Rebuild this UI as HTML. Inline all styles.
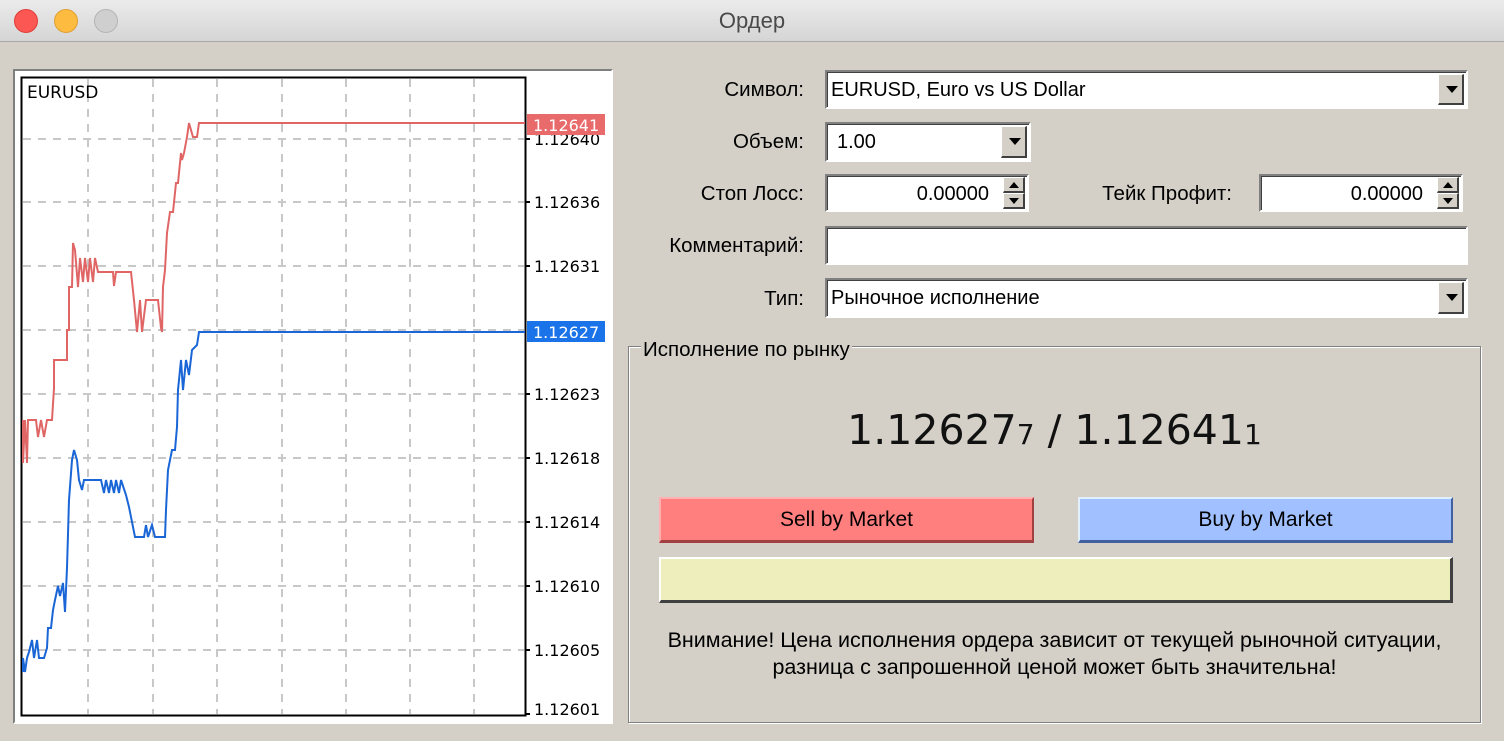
<!DOCTYPE html>
<html><head><meta charset="utf-8"><style>
*{margin:0;padding:0;box-sizing:border-box}
body{width:1504px;height:741px;background:#d4d0c8;position:relative;overflow:hidden;font-family:"Liberation Sans","DejaVu Sans",sans-serif;color:#000}
.a{position:absolute}
.title{left:0;top:0;width:1504px;height:42px;background:linear-gradient(#ebebeb,#d5d5d5);border-bottom:1px solid #a8a8a8;text-align:center;font-size:22px;line-height:42px;color:#4a4a4a}
.dot{top:9px;width:24px;height:24px;border-radius:50%}
.lbl{font-size:20.5px;text-align:right;width:200px}
.inset{background:#fff;border-top:2px solid #808080;border-left:2px solid #808080;border-bottom:2px solid #fff;border-right:2px solid #fff;box-shadow:inset 1px 1px 0 #404040;font-size:20px;padding-left:4px;line-height:36px}
.drop{position:absolute;right:2px;top:2px;width:26px;bottom:2px;background:#d4d0c8;border-top:1px solid #fff;border-left:1px solid #fff;border-right:2px solid #404040;border-bottom:2px solid #404040}
.drop:after{content:"";position:absolute;left:7px;top:11px;border-left:6px solid transparent;border-right:6px solid transparent;border-top:7px solid #000}
.spin{position:absolute;right:2px;top:1px;width:22px;bottom:1px}
.spin div{height:50%;background:#d4d0c8;border-top:1px solid #fff;border-left:1px solid #fff;border-right:2px solid #404040;border-bottom:2px solid #404040;position:relative}
.up:after{content:"";position:absolute;left:5px;top:4px;border-left:5px solid transparent;border-right:5px solid transparent;border-bottom:6px solid #000}
.dn:after{content:"";position:absolute;left:5px;top:4px;border-left:5px solid transparent;border-right:5px solid transparent;border-top:6px solid #000}
.btn{font-size:21px;text-align:center;line-height:42px}
</style></head><body>
<div class="a title">Ордер</div>
<div class="a dot" style="left:14px;background:#fc5753;border:1px solid #df3d39"></div>
<div class="a dot" style="left:54px;background:#fdbc40;border:1px solid #dea033"></div>
<div class="a dot" style="left:94px;background:#cfcfcf;border:1px solid #b4b4b4"></div>

<div class="a" style="left:13px;top:69px;width:600px;height:655px;background:#fff;border-top:2px solid #808080;border-left:2px solid #808080;border-right:2px solid #fff;border-bottom:2px solid #fff"></div>
<svg class="a" style="left:0;top:0" width="620" height="741">
<g stroke="#c8c8c8" stroke-width="2" stroke-dasharray="8,7">
<line x1="23" y1="139" x2="524" y2="139"/><line x1="23" y1="202" x2="524" y2="202"/><line x1="23" y1="266" x2="524" y2="266"/><line x1="23" y1="330" x2="524" y2="330"/><line x1="23" y1="394" x2="524" y2="394"/><line x1="23" y1="458" x2="524" y2="458"/><line x1="23" y1="522" x2="524" y2="522"/><line x1="23" y1="586" x2="524" y2="586"/><line x1="23" y1="650" x2="524" y2="650"/>
<line x1="88" y1="79" x2="88" y2="714"/><line x1="153" y1="79" x2="153" y2="714"/><line x1="217" y1="79" x2="217" y2="714"/><line x1="282" y1="79" x2="282" y2="714"/><line x1="346" y1="79" x2="346" y2="714"/><line x1="410" y1="79" x2="410" y2="714"/><line x1="474" y1="79" x2="474" y2="714"/>
</g>
<rect x="21.5" y="77.5" width="504" height="638" fill="none" stroke="#000" stroke-width="2"/>
<g stroke="#000" stroke-width="2"><line x1="525" y1="139" x2="530" y2="139"/><line x1="525" y1="202" x2="530" y2="202"/><line x1="525" y1="266" x2="530" y2="266"/><line x1="525" y1="394" x2="530" y2="394"/><line x1="525" y1="458" x2="530" y2="458"/><line x1="525" y1="522" x2="530" y2="522"/><line x1="525" y1="586" x2="530" y2="586"/><line x1="525" y1="650" x2="530" y2="650"/><line x1="525" y1="714" x2="530" y2="714"/></g>
<polyline fill="none" stroke="#e06666" stroke-width="2" points="23,420 23,463 25,420 27,463 28,420 36,420 38,437 41,420 44,437 47,420 52,420 54,388 54,360 67,360 67,330 69,330 69,287 72,287 73,243 75,250 78,287 80,258 83,282 85,258 88,282 90,258 93,282 95,258 98,272 113,272 114,286 116,272 131,272 134,300 137,332 140,300 142,332 146,300 158,300 161,328 162,332 163,287 165,270 167,233 170,212 173,212 176,183 178,183 181,153 182,160 184,153 187,137 189,123 193,137 197,137 199,123 525,123"/>
<polyline fill="none" stroke="#1a66d6" stroke-width="2" points="23,672 23,658 25,672 27,658 29,652 32,640 34,658 37,640 39,658 44,658 47,648 48,628 51,628 53,610 55,600 58,586 60,596 63,583 65,612 67,568 69,500 72,460 74,450 77,460 79,480 82,490 84,480 101,480 104,493 106,480 109,493 111,480 114,493 116,480 119,493 121,480 126,495 129,507 135,537 144,537 146,525 148,537 152,525 155,537 165,537 166,510 168,470 172,450 175,450 177,427 178,390 181,360 183,390 186,360 189,375 192,350 197,345 199,332 525,332"/>
<text x="27" y="98" font-size="17" font-family="DejaVu Sans">EURUSD</text>
<g font-size="16" font-family="DejaVu Sans" fill="#000">
<text x="534" y="145">1.12640</text><text x="534" y="208">1.12636</text><text x="534" y="272">1.12631</text><text x="534" y="400">1.12623</text><text x="534" y="464">1.12618</text><text x="534" y="528">1.12614</text><text x="534" y="592">1.12610</text><text x="534" y="656">1.12605</text><text x="534" y="715">1.12601</text>
</g>
<rect x="527" y="114" width="78" height="21" fill="#e86a6a"/>
<text x="533" y="131" font-size="16" font-family="DejaVu Sans" fill="#fff">1.12641</text>
<rect x="527" y="321" width="78" height="21" fill="#1a73e8"/>
<text x="533" y="338" font-size="16" font-family="DejaVu Sans" fill="#fff">1.12627</text>
</svg>

<div class="a lbl" style="left:604px;top:78px">Символ:</div>
<div class="a lbl" style="left:604px;top:130px">Объем:</div>
<div class="a lbl" style="left:604px;top:182px">Стоп Лосс:</div>
<div class="a lbl" style="left:1032px;top:182px">Тейк Профит:</div>
<div class="a lbl" style="left:604px;top:234px">Комментарий:</div>
<div class="a lbl" style="left:604px;top:287px">Тип:</div>

<div class="a inset" style="left:825px;top:70px;width:643px;height:39px">EURUSD, Euro vs US Dollar<div class="drop"></div></div>
<div class="a inset" style="left:825px;top:122px;width:206px;height:40px;padding-left:10px">1.00<div class="drop"></div></div>
<div class="a inset" style="left:825px;top:174px;width:204px;height:38px;text-align:right;padding-right:38px">0.00000<div class="spin"><div class="up"></div><div class="dn"></div></div></div>
<div class="a inset" style="left:1259px;top:174px;width:204px;height:38px;text-align:right;padding-right:38px">0.00000<div class="spin"><div class="up"></div><div class="dn"></div></div></div>
<div class="a inset" style="left:825px;top:226px;width:643px;height:39px"></div>
<div class="a inset" style="left:825px;top:278px;width:643px;height:40px">Рыночное исполнение<div class="drop"></div></div>

<div class="a" style="left:628px;top:346px;width:853px;height:377px;border:1px solid #808080;box-shadow:1px 1px 0 #fff,inset 1px 1px 0 #fff"></div>
<div class="a" style="left:641px;top:338px;background:#d4d0c8;font-size:20.5px;padding:0 2px">Исполнение по рынку</div>
<div class="a" style="left:628px;top:406px;width:853px;text-align:center;font-size:41px;font-family:'DejaVu Sans',sans-serif;color:#111">1.12627<span style="font-size:28px">7</span> / 1.12641<span style="font-size:28px">1</span></div>
<div class="a btn" style="left:659px;top:497px;width:375px;height:46px;background:#ff7f7f;border-top:2px solid #ffb0b0;border-left:2px solid #ffb0b0;border-right:2px solid #a04040;border-bottom:3px solid #a04040">Sell by Market</div>
<div class="a btn" style="left:1078px;top:497px;width:375px;height:46px;background:#a0c0ff;border-top:2px solid #e0f0ff;border-left:2px solid #e0f0ff;border-right:2px solid #4060a0;border-bottom:3px solid #4060a0">Buy by Market</div>
<div class="a" style="left:659px;top:557px;width:794px;height:46px;background:#eeedbc;border-top:2px solid #fff;border-left:2px solid #fff;border-right:3px solid #404040;border-bottom:3px solid #404040"></div>
<div class="a" style="left:628px;top:627px;width:853px;text-align:center;font-size:21.5px;line-height:27px">Внимание! Цена исполнения ордера зависит от текущей рыночной ситуации,<br>разница с запрошенной ценой может быть значительна!</div>
</body></html>
